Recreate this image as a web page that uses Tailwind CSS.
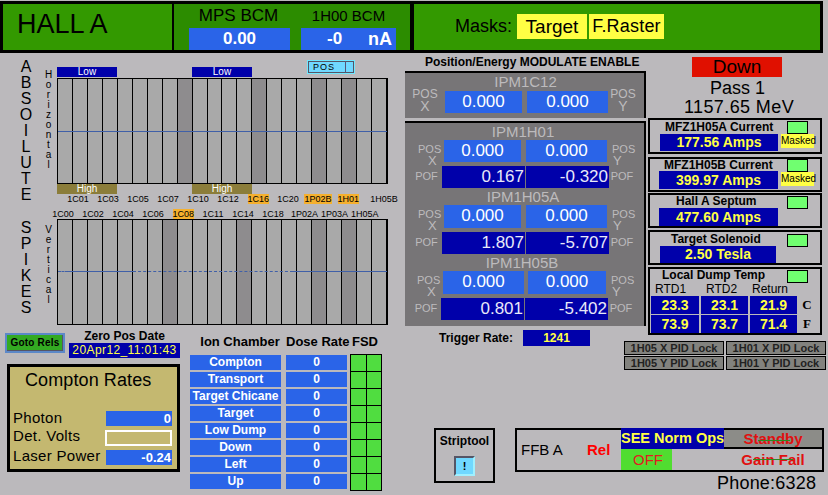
<!DOCTYPE html>
<html lang="en">
  <head>
    <meta charset="utf-8" />
    <title>Hall A</title>
    <script src="https://cdn.jsdelivr.net/npm/@tailwindcss/browser@4"></script>
  </head>
  <body class="bg-[#bbb9bc]">
    <div class="w-[828px] h-[495px] overflow-hidden bg-[#bbb9bc] text-black font-['Liberation_Sans',sans-serif]">
      <!-- top bar -->
      <header class="flex h-[53px] w-[823px] pt-px">
        <div class="w-[174px] border-[3px] border-black border-r-2 bg-[#339900] pl-[14px] text-[27px] leading-[40px]">HALL A</div>
        <div class="w-[238px] flex border-y-[3px] border-r-2 border-black bg-[#2c8c00]">
          <div class="w-[127px] pl-[15px] flex flex-col">
            <div class="w-[101px] text-[17px] leading-[24px] text-center pr-[2px] whitespace-nowrap">MPS BCM</div>
            <div class="w-[101px] h-[22px] bg-[#2a64e8] text-white font-bold text-[17px] leading-[22px] text-center">0.00</div>
          </div>
          <div class="w-[109px] flex flex-col">
            <div class="text-[15px] leading-[24px] text-center w-[95px] whitespace-nowrap">1H00 BCM</div>
            <div class="w-[95px] h-[22px] bg-[#2a64e8] text-white font-bold text-[17px] leading-[22px] flex justify-between">
              <span class="ml-[26px]">-0</span><span class="mr-[4px] text-[18px]">nA</span>
            </div>
          </div>
        </div>
        <div class="flex-1 flex items-center border-[3px] border-l-2 border-black bg-[#339900] pl-[41px] text-[18px] pb-[2px]">
          <span class="w-[62px]">Masks:</span>
          <span class="w-[70px] h-[25px] bg-[#ffff44] leading-[25px] text-center text-[19px]">Target</span>
          <span class="ml-[2px] w-[75px] h-[25px] bg-[#ffff44] leading-[25px] text-center text-[18px] tracking-[0.2px]">F.Raster</span>
        </div>
      </header>

      <main class="flex">
        <!-- left column: position charts and ion chambers -->
        <section class="w-[405px] shrink-0">
          <div class="flex h-[277px]">
            <div class="w-[40px] pl-[12px] text-center text-[16px]">
              <div class="pt-[6px] flex flex-col">
                <span class="h-[16px] leading-[16px]">A</span><span class="h-[16px] leading-[16px]">B</span><span class="h-[16px] leading-[16px]">S</span><span class="h-[16px] leading-[16px]">O</span><span class="h-[16px] leading-[16px]">I</span><span class="h-[16px] leading-[16px]">L</span><span class="h-[16px] leading-[16px]">U</span><span class="h-[16px] leading-[16px]">T</span><span class="h-[16px] leading-[16px]">E</span>
              </div>
              <div class="mt-[17px] flex flex-col">
                <span class="h-[16px] leading-[16px]">S</span><span class="h-[16px] leading-[16px]">P</span><span class="h-[16px] leading-[16px]">I</span><span class="h-[16px] leading-[16px]">K</span><span class="h-[16px] leading-[16px]">E</span><span class="h-[16px] leading-[16px]">S</span>
              </div>
            </div>
            <div class="w-[17px] text-center text-[10px] leading-[10px]">
              <div class="pt-[17px] flex flex-col">
                <span>H</span><span>o</span><span>r</span><span>i</span><span>z</span><span>o</span><span>n</span><span>t</span><span>a</span><span>l</span>
              </div>
              <div class="mt-[55px] flex flex-col">
                <span>V</span><span>e</span><span>r</span><span>t</span><span>i</span><span>c</span><span>a</span><span>l</span>
              </div>
            </div>
            <div class="w-[348px] text-[10px]">
              <div class="h-[25px] flex items-end">
                <div class="w-[60px] h-[10px] mb-px bg-[#0000aa] text-white text-center text-[10px] leading-[10px]">Low</div>
                <div class="ml-[75px] w-[60px] h-[10px] mb-px bg-[#0000aa] text-white text-center text-[10px] leading-[10px]">Low</div>
                <div class="ml-[55px] mb-[4px] w-[48px] h-[14px] border border-[#70e8ff] bg-[#70d8ff] flex text-[9px] leading-[12px] tracking-[1px] shadow-[inset_1px_1px_0_0_#556,inset_-1px_-1px_0_0_#556]">
                  <span class="w-[38px] pl-[5px] border-r border-[#557]">POS</span>
                </div>
              </div>
              <div id="chartH" class="relative flex w-[331px] h-[106px] border border-black">
                <div class="absolute left-0 right-0 top-[52px] h-px bg-[#4060a8]"></div>
              </div>
              <div class="flex h-[10px]">
                <div class="w-[60px] bg-[#8b7d3a] text-white text-center text-[10px] leading-[10px]">High</div>
                <div class="ml-[75px] w-[60px] bg-[#8b7d3a] text-white text-center text-[10px] leading-[10px]">High</div>
              </div>
              <div class="flex ml-[6px] h-[14px] leading-[10px] text-center text-[9px]">
                <span class="w-[30px]">1C01</span><span class="w-[30px]">1C03</span><span class="w-[30px]">1C05</span><span class="w-[30px]">1C07</span><span class="w-[30px]">1C10</span><span class="w-[30px]">1C12</span>
                <span class="w-[30px]"><span class="inline-block w-[21px] bg-[#f5b02e]">1C16</span></span><span class="w-[30px]">1C20</span>
                <span class="w-[30px]"><span class="inline-block w-[28px] bg-[#f5b02e]">1P02B</span></span><span class="w-[30px]"><span class="inline-block w-[21px] bg-[#f5b02e]">1H01</span></span><span class="w-[36px] pl-[6px]">1H05B</span>
              </div>
              <div class="flex -ml-[9px] mt-px h-[10px] leading-[10px] text-center text-[9px]">
                <span class="w-[30px]">1C00</span><span class="w-[30px]">1C02</span><span class="w-[30px]">1C04</span><span class="w-[30px]">1C06</span>
                <span class="w-[30px]"><span class="inline-block w-[21px] bg-[#f5b02e]">1C08</span></span><span class="w-[30px]">1C11</span><span class="w-[30px]">1C14</span><span class="w-[30px]">1C18</span><span class="w-[30px] pl-[3px]">1P02A</span><span class="w-[30px] pl-[3px]">1P03A</span><span class="w-[30px] pl-[3px]">1H05A</span>
              </div>
              <div id="chartV" class="relative flex w-[331px] h-[106px] border border-black">
                <div class="absolute left-0 right-0 top-[51px] flex">
                  <div class="w-[10px] border-t border-dashed border-[#4060a8]"></div>
                  <div class="w-[65px] border-t border-[#4060a8]"></div>
                  <div class="w-[160px] border-t border-dashed border-[#4060a8]"></div>
                  <div class="flex-1 border-t border-[#4060a8]"></div>
                </div>
              </div>
            </div>
          </div>

          <div class="flex">
            <!-- goto rels, zero date, compton -->
            <div class="w-[186px]">
              <div class="flex h-[34px] pt-[3px]">
                <div class="ml-[5px] w-[60px] h-[20px] border-2 border-[#5c88c8] bg-[#33aa22] text-[10px] font-bold text-center leading-[16px] tracking-[0.2px] shadow-[inset_-1px_-1px_0_0_#556]">Goto Rels</div>
                <div class="ml-[4px] w-[111px] -mt-[3px]">
                  <div class="text-center text-[12px] font-bold leading-[13px]">Zero Pos Date</div>
                  <div class="h-[15px] bg-[#0000aa] text-[#ffff44] text-[12px] leading-[15px] text-center tracking-[0.4px]">20Apr12_11:01:43</div>
                </div>
              </div>
              <div class="ml-[7px] w-[173px] h-[108px] border-[3px] border-black bg-[#c4b870] pl-[3px]">
                <div class="pl-[12px] pt-[1px] text-[18px] leading-[24px] tracking-[0.1px]">Compton Rates</div>
                <div class="mt-[18px] flex flex-col gap-[3px] text-[15px] leading-[15px] tracking-[0.3px]">
                  <div class="flex h-[16px] items-center">
                    <span class="w-[93px] pb-[2px]">Photon</span>
                    <span class="w-[66px] h-[15px] bg-[#2a64e8] text-white text-right pr-px text-[13px] font-bold leading-[15px] tracking-normal">0</span>
                  </div>
                  <div class="flex h-[17px] items-center">
                    <span class="w-[92px] pb-[4px]">Det. Volts</span>
                    <span class="w-[67px] h-[16px] border-2 border-white"></span>
                  </div>
                  <div class="flex h-[16px] items-center">
                    <span class="w-[93px] pb-[3px] whitespace-nowrap">Laser Power</span>
                    <span class="w-[66px] h-[15px] bg-[#2a64e8] text-white text-right pr-px text-[13px] font-bold leading-[15px] tracking-normal">-0.24</span>
                  </div>
                </div>
              </div>
            </div>
            <!-- ion chamber table -->
            <div class="w-[219px] pl-[4px]">
              <div class="flex h-[23px] text-[13px] font-bold leading-[23px] whitespace-nowrap">
                <span class="w-[96px] text-center pl-[4px]">Ion Chamber</span>
                <span class="w-[66px]">Dose Rate</span>
                <span>FSD</span>
              </div>
              <div class="flex">
                <div id="chambers" class="flex flex-col gap-[2px] pt-[2px]"></div>
                <div id="fsd" class="ml-[3px] mt-px w-[32px] grid grid-cols-2 border-t border-l border-black bg-[#50dd40]"></div>
              </div>
            </div>
          </div>
        </section>

        <!-- right part -->
        <section class="w-[423px] shrink-0">
          <div class="flex h-[375px]">
            <!-- IPM column -->
            <div class="w-[243px] shrink-0">
              <div class="h-[18px] pl-[20px] text-[12px] font-bold leading-[18px]">Position/Energy MODULATE ENABLE</div>
              <div class="w-[241px] h-[47px] border-t-2 border-r-2 border-black bg-[#777577] text-[#bdbbbd]">
                <div class="text-center text-[15px] leading-[18px] pl-[2px]">IPM1C12</div>
                <div class="flex">
                  <div class="w-[40px] -mt-[2px] text-center text-[12px] leading-[11px]">POS<br /><span class="text-[14px] leading-[13px]">X</span></div>
                  <div class="w-[77px] h-[22px] bg-[#2a64e8] text-white text-center text-[17px] leading-[22px]">0.000</div>
                  <div class="ml-[5px] w-[81px] h-[22px] bg-[#2a64e8] text-white text-center text-[17px] leading-[22px]">0.000</div>
                  <div class="ml-[2px] w-[26px] -mt-[2px] text-center text-[12px] leading-[11px]">POS<br /><span class="text-[14px] leading-[13px]">Y</span></div>
                </div>
              </div>
              <div class="mt-[3px] w-[241px] h-[205px] border-t-2 border-r-2 border-black border-b-0 bg-[#777577] text-[#bdbbbd] text-[11px]">
                <div class="text-center text-[15px] leading-[17px] h-[17px] pr-[3px]">IPM1H01</div>
                <div class="flex h-[26px]">
                  <div class="w-[39px] pl-[14px] pt-[3px] leading-[12px]"><span class="-ml-[1px]">POS</span><br /><span class="ml-[9px] text-[13px]">X</span></div>
                  <div class="w-[77px] h-[22px] bg-[#2a64e8] text-white text-center text-[17px] leading-[22px]">0.000</div>
                  <div class="ml-[5px] w-[81px] h-[22px] bg-[#2a64e8] text-white text-center text-[17px] leading-[22px]">0.000</div>
                  <div class="ml-[5px] w-[22px] pt-[3px] leading-[12px]">POS<br /><span class="ml-[1px] text-[13px]">Y</span></div>
                </div>
                <div class="flex h-[22px]">
                  <div class="w-[37px] pl-[6px] text-center leading-[20px]">POF</div>
                  <div class="w-[83px] bg-[#0000aa] text-[#e8e8f8] text-right pr-[1px] text-[17px] leading-[22px]">0.167</div>
                  <div class="ml-px w-[83px] bg-[#0000aa] text-[#e8e8f8] text-right pr-[1px] text-[17px] leading-[22px]">-0.320</div>
                  <div class="ml-px w-[24px] text-center leading-[20px]">POF</div>
                </div>
                <div class="mt-px text-center text-[15px] leading-[16px] h-[16px] pr-[3px]">IPM1H05A</div>
                <div class="flex h-[27px]">
                  <div class="w-[39px] pl-[14px] pt-[3px] leading-[12px]"><span class="-ml-[1px]">POS</span><br /><span class="ml-[9px] text-[13px]">X</span></div>
                  <div class="w-[77px] h-[23px] bg-[#2a64e8] text-white text-center text-[17px] leading-[22px]">0.000</div>
                  <div class="ml-[5px] w-[81px] h-[23px] bg-[#2a64e8] text-white text-center text-[17px] leading-[22px]">0.000</div>
                  <div class="ml-[5px] w-[22px] pt-[3px] leading-[12px]">POS<br /><span class="ml-[1px] text-[13px]">Y</span></div>
                </div>
                <div class="flex h-[22px]">
                  <div class="w-[37px] pl-[6px] text-center leading-[20px]">POF</div>
                  <div class="w-[83px] bg-[#0000aa] text-[#e8e8f8] text-right pr-[1px] text-[17px] leading-[22px]">1.807</div>
                  <div class="ml-px w-[83px] bg-[#0000aa] text-[#e8e8f8] text-right pr-[1px] text-[17px] leading-[22px]">-5.707</div>
                  <div class="ml-px w-[24px] text-center leading-[20px]">POF</div>
                </div>
                <div class="mt-px text-center text-[15px] leading-[16px] h-[16px] pr-[5px]">IPM1H05B</div>
                <div class="flex h-[27px]">
                  <div class="w-[38px] pl-[13px] pt-[3px] leading-[12px]"><span class="-ml-[1px]">POS</span><br /><span class="ml-[9px] text-[13px]">X</span></div>
                  <div class="w-[81px] h-[23px] bg-[#2a64e8] text-white text-center text-[17px] leading-[22px]">0.000</div>
                  <div class="ml-[4px] w-[78px] h-[23px] bg-[#2a64e8] text-white text-center text-[17px] leading-[22px]">0.000</div>
                  <div class="ml-[5px] w-[22px] pt-[3px] leading-[12px]">POS<br /><span class="ml-[1px] text-[13px]">Y</span></div>
                </div>
                <div class="flex h-[22px]">
                  <div class="w-[36px] pl-[6px] text-center leading-[20px]">POF</div>
                  <div class="w-[83px] bg-[#0000aa] text-[#e8e8f8] text-right pr-[1px] text-[17px] leading-[22px]">0.801</div>
                  <div class="ml-px w-[83px] bg-[#0000aa] text-[#e8e8f8] text-right pr-[1px] text-[17px] leading-[22px]">-5.402</div>
                  <div class="ml-px w-[24px] text-center leading-[20px]">POF</div>
                </div>
              </div>
              <div class="flex items-center mt-[4px] ml-[34px] h-[16px]">
                <span class="w-[84px] text-[12px] font-bold">Trigger Rate:</span>
                <span class="w-[67px] h-[16px] bg-[#0000aa] text-[#ffff44] text-center text-[12px] font-bold leading-[16px]">1241</span>
              </div>
            </div>

            <!-- magnets column -->
            <div class="w-[180px] shrink-0">
              <div class="ml-[44px] mt-[4px] w-[90px] h-[20px] bg-[#e01000] text-center text-[19px] leading-[20px]">Down</div>
              <div class="w-[174px] pl-[5px] text-center text-[18px] leading-[20px] pt-px">Pass 1</div>
              <div class="w-[174px] pl-[8px] text-center text-[18px] leading-[19px] tracking-[0.4px]">1157.65 MeV</div>
              <div class="mt-[1px] w-[174px]">
                <div class="relative h-[36px] border-2 border-black">
                  <div class="text-[12px] font-bold leading-[14px] pl-[15px]">MFZ1H05A Current</div>
                  <div class="flex">
                    <div class="ml-[10px] w-[118px] h-[17px] bg-[#0000aa] text-[#ffff44] text-center font-bold text-[14px] leading-[17px]">177.56 Amps</div>
                    <div class="ml-[3px] w-[33px] h-[14px] bg-[#ffff44] text-center text-[10px] leading-[14px]">Masked</div>
                  </div>
                  <div class="absolute left-[137px] top-px w-[21px] h-[13px] border border-black bg-[#70ff70]"></div>
                </div>
                <div class="relative mt-[3px] h-[35px] border-2 border-black">
                  <div class="text-[12px] font-bold leading-[12px] pl-[14px]">MFZ1H05B Current</div>
                  <div class="flex">
                    <div class="ml-[9px] w-[119px] h-[18px] bg-[#0000aa] text-[#ffff44] text-center font-bold text-[14px] leading-[18px]">399.97 Amps</div>
                    <div class="ml-[3px] w-[33px] h-[14px] mt-px bg-[#ffff44] text-center text-[10px] leading-[14px]">Masked</div>
                  </div>
                  <div class="absolute left-[137px] top-0 w-[21px] h-[13px] border border-black bg-[#70ff70]"></div>
                </div>
                <div class="relative mt-px h-[35px] border-2 border-black">
                  <div class="text-[12px] font-bold leading-[13px] pl-[26px]">Hall A Septum</div>
                  <div class="ml-[9px] w-[119px] h-[18px] bg-[#0000aa] text-[#ffff44] text-center font-bold text-[14px] leading-[18px]">477.60 Amps</div>
                  <div class="absolute left-[137px] top-px w-[21px] h-[13px] border border-black bg-[#70ff70]"></div>
                </div>
                <div class="relative mt-[2px] h-[35px] border-2 border-black">
                  <div class="text-[12px] font-bold leading-[14px] pl-[21px]">Target Solenoid</div>
                  <div class="ml-[10px] w-[116px] h-[17px] bg-[#0000aa] text-[#ffff44] text-center font-bold text-[14px] leading-[17px]">2.50 Tesla</div>
                  <div class="absolute left-[137px] top-[2px] w-[21px] h-[13px] border border-black bg-[#70ff70]"></div>
                </div>
                <div class="relative mt-[2px] h-[68px] border-2 border-black">
                  <div class="text-[12px] font-bold leading-[12px] pl-[12px] h-[12px]">Local Dump Temp</div>
                  <div class="flex text-[12px] leading-[16px] h-[15px]">
                    <span class="ml-[5px] w-[51px]">RTD1</span><span class="w-[46px]">RTD2</span><span>Return</span>
                  </div>
                  <div class="grid grid-cols-[48px_47px_47px_16px] gap-x-[2px] gap-y-px ml-px">
                    <div class="h-[18px] bg-[#0000aa] text-[#ffff44] text-center font-bold text-[14px] leading-[18px]">23.3</div>
                    <div class="h-[18px] bg-[#0000aa] text-[#ffff44] text-center font-bold text-[14px] leading-[18px]">23.1</div>
                    <div class="h-[18px] bg-[#0000aa] text-[#ffff44] text-center font-bold text-[14px] leading-[18px]">21.9</div>
                    <div class="h-[18px] font-['Liberation_Serif',serif] font-bold text-center text-[13px] leading-[18px]">C</div>
                    <div class="h-[18px] bg-[#0000aa] text-[#ffff44] text-center font-bold text-[14px] leading-[18px]">73.9</div>
                    <div class="h-[18px] bg-[#0000aa] text-[#ffff44] text-center font-bold text-[14px] leading-[18px]">73.7</div>
                    <div class="h-[18px] bg-[#0000aa] text-[#ffff44] text-center font-bold text-[14px] leading-[18px]">71.4</div>
                    <div class="h-[18px] font-['Liberation_Serif',serif] font-bold text-center text-[13px] leading-[18px]">F</div>
                  </div>
                  <div class="absolute left-[137px] top-px w-[21px] h-[13px] border border-black bg-[#70ff70]"></div>
                </div>
              </div>
              <!-- PID locks hang out to the left of the column -->
              <div class="-ml-[24px] mt-[6px] grid grid-cols-[100px_100px] gap-x-[2px] gap-y-px text-[11px] font-bold text-[#222] text-center leading-[12px]">
                <div class="h-[14px] border border-black bg-[#82827e]">1H05 X PID Lock</div>
                <div class="h-[14px] border border-black bg-[#82827e]">1H01 X PID Lock</div>
                <div class="h-[14px] border border-black bg-[#82827e]">1H05 Y PID Lock</div>
                <div class="h-[14px] border border-black bg-[#82827e]">1H01 Y PID Lock</div>
              </div>
            </div>
          </div>

          <!-- bottom row -->
          <div class="flex items-start">
            <div class="ml-[29px] w-[61px] h-[55px] border-2 border-black flex flex-col items-center">
              <div class="text-[12px] font-bold leading-[13px] mt-[5px]">Striptool</div>
              <div class="mt-[8px] w-[21px] h-[20px] border-2 border-t-[#556] border-l-[#556] border-r-[#a0f0ff] border-b-[#a0f0ff] bg-[#70d8ff] text-center text-[11px] font-bold leading-[16px]">!</div>
            </div>
            <div class="ml-[20px]">
              <div class="flex w-[309px] h-[44px] border-2 border-black">
                <div class="w-[104px] flex items-center text-[15px] pl-[4px]">
                  <span class="w-[66px]">FFB A</span><span class="text-[#ff0000] font-bold">Rel</span>
                </div>
                <div class="w-[103px]">
                  <div class="h-[21px] -mt-[2px] mb-[2px] bg-[#0000aa] text-[#ffff44] font-bold text-[14.5px] leading-[21px] whitespace-nowrap">SEE Norm Ops</div>
                  <div class="w-[51px] h-[21px] -mt-[2px] pl-[3px] bg-[#50dd30] text-[#e02020] text-center text-[15px] leading-[21px]">OFF</div>
                </div>
                <div class="w-[98px]">
                  <div class="relative h-[17px] bg-[#8c8c88] text-[#e01010] text-center font-bold text-[15px] leading-[17px]">
                    Standby
                    <div class="absolute left-[34px] top-[10px] w-[32px] h-px bg-[#2a8a20]"></div>
                  </div>
                  <div class="h-[2px] bg-black"></div>
                  <div class="relative text-[#e01010] text-center font-bold text-[15px] leading-[21px]">
                    Gain Fail
                    <div class="absolute left-[29px] top-[10px] w-[40px] h-px bg-[#2a8a20]"></div>
                  </div>
                </div>
              </div>
              <div class="pl-[202px] text-[18px] leading-[22px] tracking-[0.2px]">Phone:6328</div>
            </div>
          </div>
        </section>
      </main>
    </div>

    <script>
      // bars that are shaded darker in each chart
      const darkH = [8, 13, 17, 19];
      const darkV = [7, 12, 17, 19];

      function fillChart(id, dark) {
        const chart = document.getElementById(id);
        for (let i = 0; i < 22; i++) {
          const bar = document.createElement("div");
          bar.className = dark.includes(i)
            ? "w-[15px] h-full border-r border-black bg-[#8e8c8e]"
            : "w-[15px] h-full border-r border-black bg-[#a9a9a9]";
          chart.appendChild(bar);
        }
      }
      fillChart("chartH", darkH);
      fillChart("chartV", darkV);

      const chambers = ["Compton", "Transport", "Target Chicane", "Target", "Low Dump", "Down", "Left", "Up"];
      chambers.forEach((name) => {
        const row = document.createElement("div");
        row.className = "flex h-[15px] text-white font-bold text-[12px] leading-[15px] text-center";
        row.innerHTML = `<span class="w-[91px] bg-[#2a64e8] whitespace-nowrap">${name}</span><span class="ml-[5px] w-[61px] bg-[#2a64e8]">0</span>`;
        document.getElementById("chambers").appendChild(row);
        for (let c = 0; c < 2; c++) {
          const cell = document.createElement("div");
          cell.className = "h-[17px] border-r border-b border-black";
          document.getElementById("fsd").appendChild(cell);
        }
      });
    </script>
  </body>
</html>
